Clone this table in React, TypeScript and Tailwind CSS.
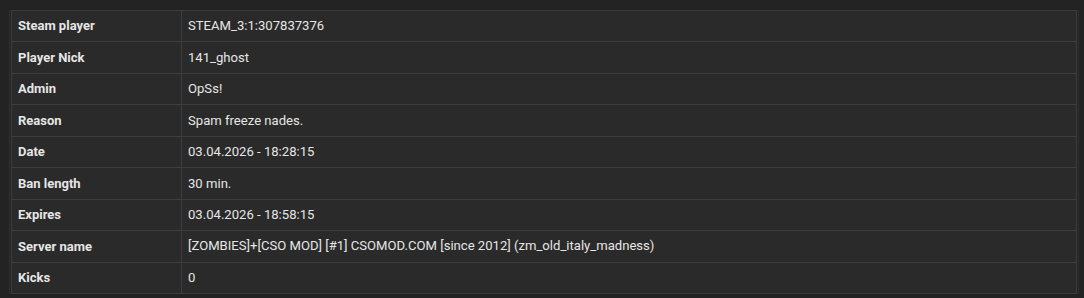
import React from "react";

const rows: [string, string][] = [
  ["Steam player", "STEAM_3:1:307837376"],
  ["Player Nick", "141_ghost"],
  ["Admin", "OpSs!"],
  ["Reason", "Spam freeze nades."],
  ["Date", "03.04.2026 - 18:28:15"],
  ["Ban length", "30 min."],
  ["Expires", "03.04.2026 - 18:58:15"],
  ["Server name", "[ZOMBIES]+[CSO MOD] [#1] CSOMOD.COM [since 2012] (zm_old_italy_madness)"],
  ["Kicks", "0"],
];

export default function App() {
  return (
    <div className="w-[1084px] h-[298px] bg-[#232323] pt-[10px] pl-[9px] pr-[5px] font-['Roboto',sans-serif]">
      <div className="border-x border-[#303030] px-px">
        <table className="w-full border-collapse bg-[#2a2a2a] text-[#e6e6e6]">
          <tbody>
            {rows.map(([label, value]) => (
              <tr key={label} className="h-[31.45px]">
                <td className="w-[170px] border border-[#3d3d3d] px-[6px] py-0 text-[13px] font-bold">
                  {label}
                </td>
                <td className="border border-[#3d3d3d] px-[6px] py-0 text-[13.1px]">{value}</td>
              </tr>
            ))}
          </tbody>
        </table>
      </div>
    </div>
  );
}
